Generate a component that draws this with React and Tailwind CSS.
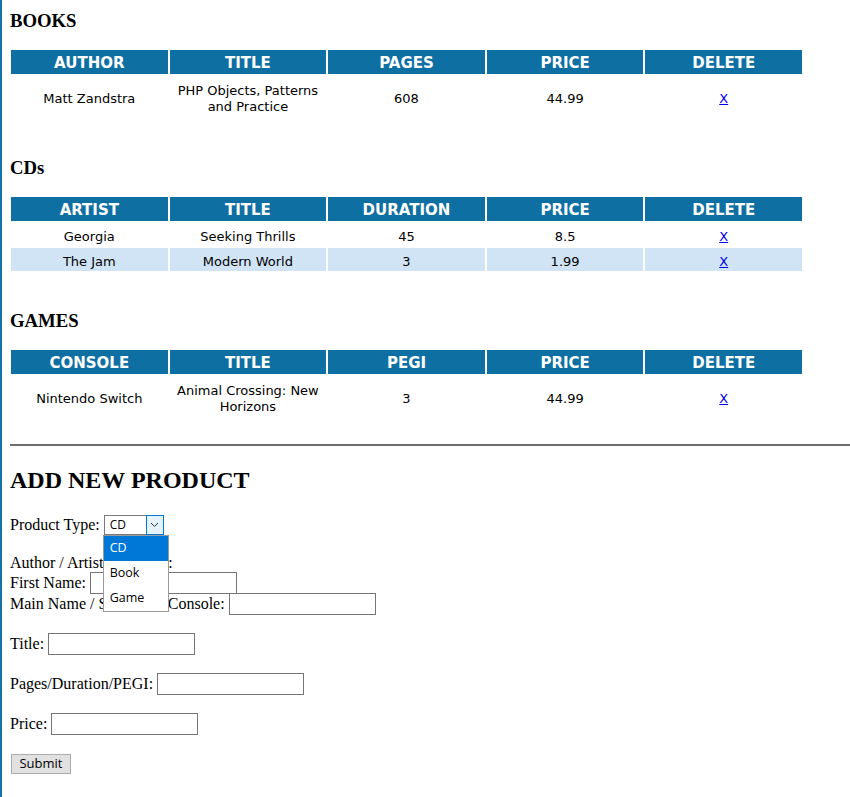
import React from 'react'

const books = {
  cols: ['AUTHOR', 'TITLE', 'PAGES', 'PRICE', 'DELETE'],
  rows: [{ cells: ['Matt Zandstra', 'PHP Objects, Patterns and Practice', '608', '44.99'], tall: true }],
}

const cds = {
  cols: ['ARTIST', 'TITLE', 'DURATION', 'PRICE', 'DELETE'],
  rows: [
    { cells: ['Georgia', 'Seeking Thrills', '45', '8.5'] },
    { cells: ['The Jam', 'Modern World', '3', '1.99'], alt: true },
  ],
}

const games = {
  cols: ['CONSOLE', 'TITLE', 'PEGI', 'PRICE', 'DELETE'],
  rows: [{ cells: ['Nintendo Switch', 'Animal Crossing: New Horizons', '3', '44.99'], tall: true }],
}

const ProductTable = ({ data }) => (
  <div className="ml-[1px] grid w-[791px] grid-cols-5 gap-[2px] font-['DejaVu_Sans',sans-serif]">
    {data.cols.map((c) => (
      <div key={c} className="flex h-[24px] items-center justify-center bg-[#0e6fa3] pt-[2px] text-[15px] font-bold text-white">
        {c}
      </div>
    ))}
    {data.rows.map((row, i) => (
      <React.Fragment key={i}>
        {row.cells.map((cell, j) => (
          <div
            key={j}
            className={`flex items-center justify-center px-[2px] text-center text-[13px] leading-[16px] text-black ${row.tall ? 'h-[44px] pt-[2px]' : 'h-[23px] pt-[4px]'} ${row.alt ? 'bg-[#d0e4f5]' : ''}`}
          >
            {cell}
          </div>
        ))}
        <div className={`flex items-center justify-center text-[13px] ${row.tall ? 'h-[44px] pt-[2px]' : 'h-[23px] pt-[4px]'} ${row.alt ? 'bg-[#d0e4f5]' : ''}`}>
          <a href="#" className="text-[#0000ee] underline">X</a>
        </div>
      </React.Fragment>
    ))}
  </div>
)

const Heading = ({ children, className }) => (
  <h3 className={`text-[18.72px] font-bold leading-[21px] ${className}`}>{children}</h3>
)

const Field = ({ w = 'w-[147px]' }) => (
  <span className={`ml-[4px] inline-block h-[22px] ${w} border border-[#767676] bg-white`} />
)

export default function App() {
  return (
    <div className="min-h-[797px] border-l-2 border-[#1473a8] bg-white pl-[8px] pt-[10px] font-['Liberation_Serif',serif] text-[16px] text-black">
      <Heading>BOOKS</Heading>
      <div className="mt-[19px]">
        <ProductTable data={books} />
      </div>

      <Heading className="mt-[37px]">CDs</Heading>
      <div className="mt-[19px]">
        <ProductTable data={cds} />
      </div>

      <Heading className="mt-[39px]">GAMES</Heading>
      <div className="mt-[19px]">
        <ProductTable data={games} />
      </div>

      <div className="mt-[24px] h-[2px] w-full bg-[#6e6e6e]" />

      <h2 className="mt-[21px] text-[24px] font-bold leading-[27px]">ADD NEW PRODUCT</h2>

      <div className="relative mt-[21px] flex h-[20px] items-center">
        <span>Product Type:</span>
        <div className="relative ml-[4px] flex h-[20px] w-[60px] border border-[#7a7a7a] bg-white font-['Open_Sans',sans-serif] text-[12px]">
          <span className="flex flex-1 items-center pl-[5px]">CD</span>
          <span className="-my-[1px] -mr-[1px] flex w-[18px] items-center justify-center border border-[#0078d7] bg-[#e5f1fb]">
            <svg width="9" height="6" viewBox="0 0 9 6">
              <polyline points="1,1 4.5,4.5 8,1" fill="none" stroke="#333" strokeWidth="1" />
            </svg>
          </span>
          <div className="absolute left-[-2px] top-[19px] z-10 w-[66px] border border-[#9a9a9a] bg-white text-[12.5px] text-black">
            <div className="flex h-[25px] items-center bg-[#0078d7] pl-[6px] text-white">CD</div>
            <div className="flex h-[25px] items-center pl-[6px]">Book</div>
            <div className="flex h-[25px] items-center pl-[6px]">Game</div>
          </div>
        </div>
      </div>

      <div className="mt-[19px] flex h-[18px] items-center">Author / Artist / Console:</div>
      <div className="flex h-[21px] items-center">
        <span>First Name:</span>
        <Field />
      </div>
      <div className="flex h-[22px] items-center">
        <span>Main Name / Surname / Console:</span>
        <Field />
      </div>

      <div className="mt-[18px] flex h-[22px] items-center">
        <span>Title:</span>
        <Field />
      </div>
      <div className="mt-[18px] flex h-[22px] items-center">
        <span>Pages/Duration/PEGI:</span>
        <Field />
      </div>
      <div className="mt-[18px] flex h-[22px] items-center">
        <span>Price:</span>
        <Field />
      </div>

      <button className="ml-[1px] mt-[19px] flex h-[20px] w-[60px] items-center justify-center border border-[#adadad] bg-[#e1e1e1] font-['Open_Sans',sans-serif] text-[13px]">
        Submit
      </button>
    </div>
  )
}
